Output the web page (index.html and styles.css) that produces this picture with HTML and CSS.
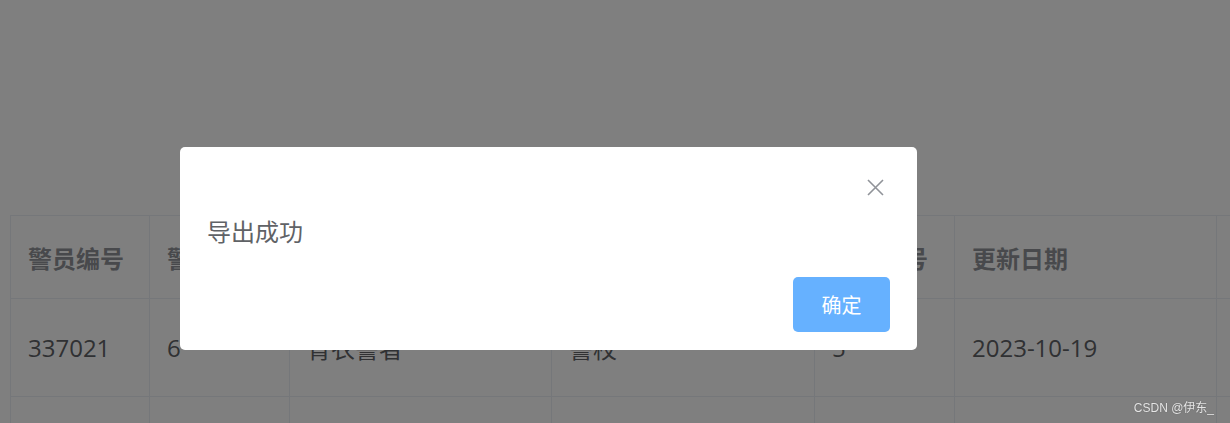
FILE: index.html
```html
<!DOCTYPE html>
<html lang="zh-CN">

<head>
    <meta charset="UTF-8">
    <meta name="viewport" content="width=device-width, initial-scale=1.0">
    <title>警员信息</title>
    <link rel="stylesheet" href="styles.css">
</head>

<body>

    <div class="page">
        <div class="table-wrap">
            <table class="table">
                <colgroup>
                    <col style="width: 139px">
                    <col style="width: 140px">
                    <col style="width: 262px">
                    <col style="width: 263px">
                    <col style="width: 140px">
                    <col style="width: 262px">
                    <col style="width: 200px">
                </colgroup>
                <thead>
                    <tr>
                        <th>警员编号</th>
                        <th>警员等级</th>
                        <th>警员称号</th>
                        <th>毕业院校</th>
                        <th>警衔编号</th>
                        <th>更新日期</th>
                        <th></th>
                    </tr>
                </thead>
                <tbody>
                    <tr>
                        <td>337021</td>
                        <td>6</td>
                        <td>青衣警者</td>
                        <td>警校</td>
                        <td>5</td>
                        <td>2023-10-19</td>
                        <td></td>
                    </tr>
                    <tr>
                        <td></td>
                        <td></td>
                        <td></td>
                        <td></td>
                        <td></td>
                        <td></td>
                        <td></td>
                    </tr>
                </tbody>
            </table>
        </div>
    </div>

    <div class="mask"></div>

    <div class="msgbox">
        <div class="msgbox-header">
            <button class="msgbox-close" aria-label="关闭">
                <svg width="17" height="17" viewBox="0 0 17 17">
                    <path d="M1 1 L16 16 M16 1 L1 16" stroke="#909399" stroke-width="1.6" fill="none"/>
                </svg>
            </button>
        </div>
        <div class="msgbox-content">导出成功</div>
        <div class="msgbox-footer">
            <button class="btn-primary">确定</button>
        </div>
    </div>

    <div class="watermark">CSDN @伊东_</div>

</body>

</html>
```

FILE: styles.css
```css
body {
    margin: 0;
    font-family: "Open Sans", "Noto Sans CJK SC", sans-serif;
    background: #fff;
    overflow: hidden;
}

.page {
    height: 100vh;
    box-sizing: border-box;
    padding: 215px 0 0 10px;
    overflow: hidden;
}

.table-wrap {
    overflow: hidden;
}

.table {
    border-collapse: collapse;
    table-layout: fixed;
    width: 1406px;
}

.table th,
.table td {
    border: 1px solid #ebeef5;
    padding: 0 0 0 17px;
    text-align: left;
    font-size: 24px;
}

.table th {
    height: 82px;
    color: #909399;
    font-weight: bold;
}

.table td {
    height: 97px;
    color: #606266;
}

.mask {
    position: fixed;
    inset: 0;
    background: rgba(0, 0, 0, 0.5);
}

.msgbox {
    position: fixed;
    left: 180px;
    top: 147px;
    width: 737px;
    box-sizing: border-box;
    padding: 0 27px 18px;
    background: #fff;
    border-radius: 5px;
    display: flex;
    flex-direction: column;
}

.msgbox-header {
    display: flex;
    justify-content: flex-end;
    padding-top: 32px;
}

.msgbox-close {
    width: 17px;
    height: 17px;
    padding: 0;
    margin-right: 6px;
    border: none;
    background: none;
    display: flex;
}

.msgbox-content {
    margin-top: 20px;
    font-size: 24px;
    line-height: 32px;
    color: #606266;
}

.msgbox-footer {
    display: flex;
    justify-content: flex-end;
    margin-top: 29px;
}

.btn-primary {
    width: 97px;
    height: 55px;
    border: none;
    border-radius: 5px;
    background: #66b1ff;
    color: #fff;
    font-family: "Noto Sans CJK SC", sans-serif;
    font-size: 20px;
}

.watermark {
    position: fixed;
    right: 16px;
    bottom: 8px;
    font-family: "Liberation Sans", "Noto Sans CJK SC", sans-serif;
    font-size: 12px;
    color: #e6e6e6;
    text-shadow: 0 0 1px #555;
}
```
